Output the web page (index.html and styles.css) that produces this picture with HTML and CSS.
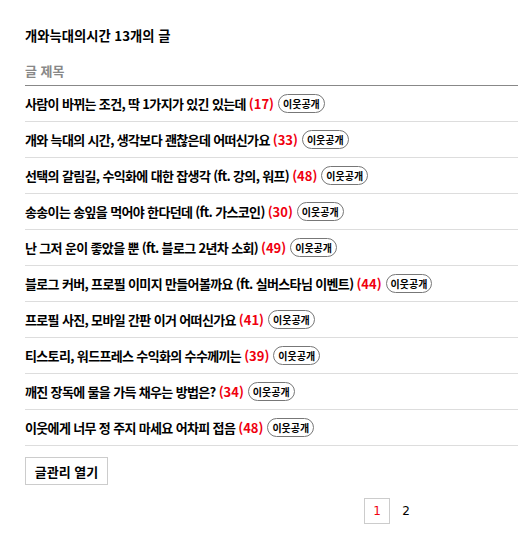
FILE: index.html
```html
<!DOCTYPE html>
<html lang="ko">
<head>
<meta charset="utf-8">
<link rel="stylesheet" href="styles.css">
</head>
<body>
<div class="wrap">
  <h2 class="title">개와늑대의시간 13개의 글</h2>
  <div class="head">글 제목</div>
  <ul class="list">
    <li><span class="t">사람이 바뀌는 조건, 딱 1가지가 있긴 있는데</span> <span class="c">(17)</span><span class="badge">이웃공개</span></li>
    <li><span class="t">개와 늑대의 시간, 생각보다 괜찮은데 어떠신가요</span> <span class="c">(33)</span><span class="badge">이웃공개</span></li>
    <li><span class="t">선택의 갈림길, 수익화에 대한 잡생각 (ft. 강의, 워프)</span> <span class="c">(48)</span><span class="badge">이웃공개</span></li>
    <li><span class="t">송송이는 송잎을 먹어야 한다던데 (ft. 가스코인)</span> <span class="c">(30)</span><span class="badge">이웃공개</span></li>
    <li><span class="t">난 그저 운이 좋았을 뿐 (ft. 블로그 2년차 소회)</span> <span class="c">(49)</span><span class="badge">이웃공개</span></li>
    <li><span class="t">블로그 커버, 프로필 이미지 만들어볼까요 (ft. 실버스타님 이벤트)</span> <span class="c">(44)</span><span class="badge">이웃공개</span></li>
    <li><span class="t">프로필 사진, 모바일 간판 이거 어떠신가요</span> <span class="c">(41)</span><span class="badge">이웃공개</span></li>
    <li><span class="t">티스토리, 워드프레스 수익화의 수수께끼는</span> <span class="c">(39)</span><span class="badge">이웃공개</span></li>
    <li><span class="t">깨진 장독에 물을 가득 채우는 방법은?</span> <span class="c">(34)</span><span class="badge">이웃공개</span></li>
    <li><span class="t">이웃에게 너무 정 주지 마세요 어차피 접음</span> <span class="c">(48)</span><span class="badge">이웃공개</span></li>
  </ul>
  <button class="manage">글관리 열기</button>
  <div class="pager">
    <span class="page cur">1</span>
    <span class="page">2</span>
  </div>
</div>
</body>
</html>
```
FILE: styles.css
```css
* { box-sizing: border-box; }
body {
  margin: 0;
  background: #fff;
  font-family: "Noto Sans CJK KR", "Noto Sans", sans-serif;
  color: #000;
}
.wrap {
  padding: 26px 0 0 25px;
}
.title {
  margin: 0;
  font-size: 13.3px;
  font-weight: bold;
  line-height: 20px;
}
.head {
  margin-top: 15px;
  font-size: 13px;
  font-weight: bold;
  color: #888;
  line-height: 20px;
  padding-bottom: 4px;
  border-bottom: 1px solid #888;
}
.list {
  list-style: none;
  margin: 0;
  padding: 0;
}
.list li {
  height: 36px;
  display: flex;
  align-items: center;
  border-bottom: 1px solid #ddd;
  font-size: 13px;
  font-weight: bold;
  white-space: pre;
}
.t { letter-spacing: -0.65px; }
.c { color: #f0000f; margin-left: 3px; }
.badge {
  display: inline-flex;
  align-items: center;
  height: 19px;
  margin-left: 4px;
  padding: 0 4px;
  border: 1px solid #777;
  border-radius: 10px;
  font-size: 10px;
  font-weight: bold;
}
.manage {
  display: block;
  margin-top: 11px;
  width: 83px;
  height: 28px;
  background: #fff;
  border: 1px solid #ccc;
  font-family: inherit;
  font-size: 13px;
  font-weight: bold;
  color: #000;
  padding: 0;
}
.pager {
  display: flex;
  align-items: center;
  gap: 3px;
  margin-top: 13px;
  padding-left: 339px;
}
.page {
  display: flex;
  align-items: center;
  justify-content: center;
  width: 26px;
  height: 26px;
  font-size: 12px;
  font-family: "DejaVu Sans", sans-serif;
}
.page.cur {
  border: 1px solid #ccc;
  color: #f0000f;
}
```
